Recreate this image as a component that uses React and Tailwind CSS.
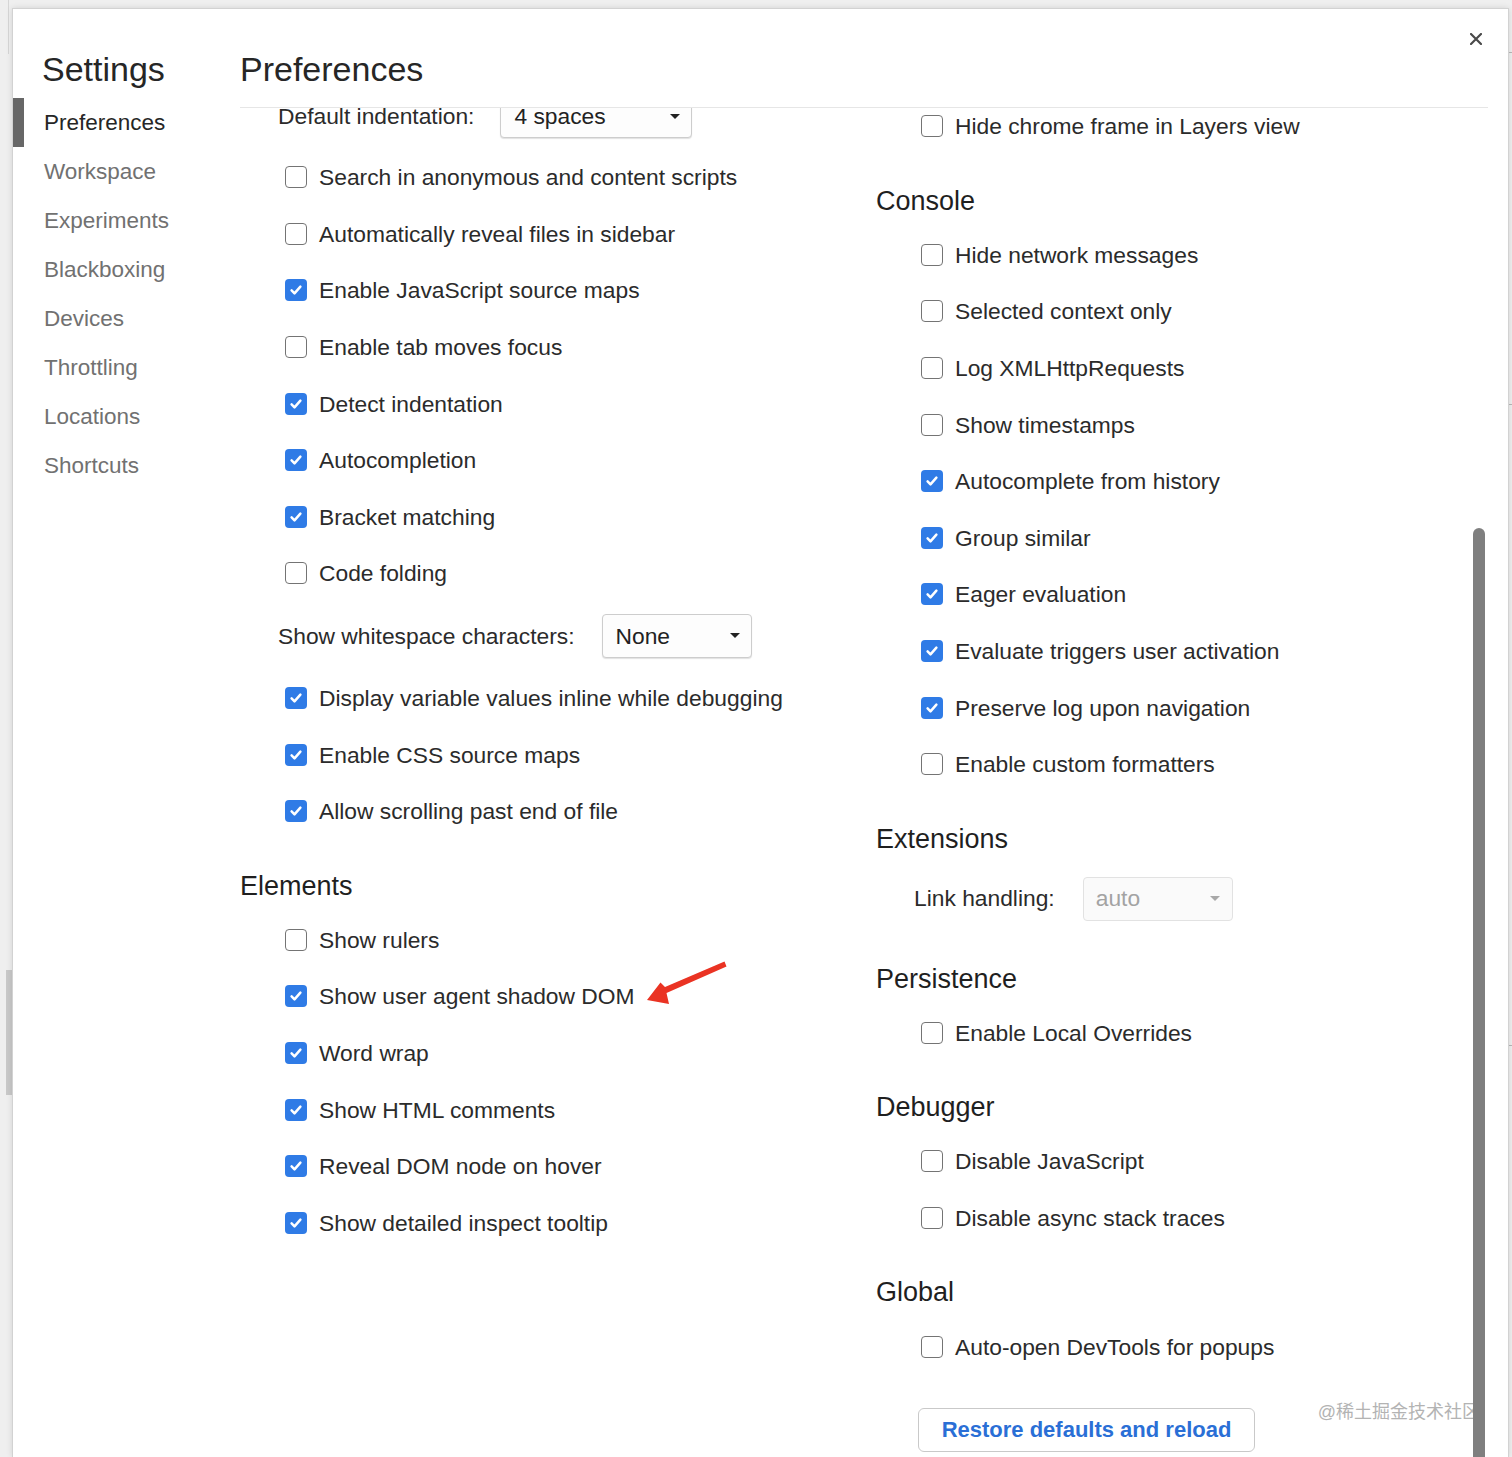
import React from "react";

const Box = ({ checked }) =>
  checked ? (
    <span className="flex h-[22px] w-[22px] shrink-0 items-center justify-center rounded-[4px] bg-[#2f7be6]">
      <svg viewBox="0 0 16 16" className="h-[16px] w-[16px]">
        <path d="M3.6 8.4l2.9 2.9 5.9-6.6" fill="none" stroke="white" strokeWidth="2.5" strokeLinecap="round" strokeLinejoin="round" />
      </svg>
    </span>
  ) : (
    <span className="h-[22px] w-[22px] shrink-0 rounded-[4px] border-[1.5px] border-[#747474] bg-white" />
  );

const Row = ({ label, checked, children }) => (
  <div className="relative flex h-[56.6px] items-center gap-[12px] pl-[45px]">
    <Box checked={checked} />
    <span className="whitespace-nowrap text-[22.8px] text-[#2b2b2b]">{label}</span>
    {children}
  </div>
);

const Header = ({ children }) => (
  <div className="flex h-[72px] items-end pb-[10px] text-[27px] leading-[32px] text-[#1f1f1f]">{children}</div>
);

const Caret = ({ color }) => (
  <svg viewBox="0 0 10 5" className="h-[5px] w-[10px]">
    <path d="M0 0h10L5 5z" fill={color} />
  </svg>
);

const Select = ({ value, width, disabled }) => (
  <div
    className={
      disabled
        ? "flex h-[44px] items-center justify-between rounded-[4px] border border-[#e2e2e2] bg-[#fafafa] pl-[12px] pr-[12px] text-[22.8px] text-[#a3a3a3]"
        : "flex h-[44px] items-center justify-between rounded-[4px] border border-[#cdcdcd] bg-[#fdfdfd] pl-[13px] pr-[11px] text-[22.8px] text-[#222] shadow-[0_1px_1px_rgba(0,0,0,0.12)]"
    }
    style={{ width }}
  >
    <span>{value}</span>
    <Caret color={disabled ? "#a8a8a8" : "#222"} />
  </div>
);

const SelectRow = ({ label, value, width, gap, disabled }) => (
  <div className="flex h-[68px] items-center pl-[38px]">
    <span className="whitespace-nowrap text-[22.8px] text-[#2b2b2b]">{label}</span>
    <div style={{ marginLeft: gap }}>
      <Select value={value} width={width} disabled={disabled} />
    </div>
  </div>
);

const sidebar = ["Preferences", "Workspace", "Experiments", "Blackboxing", "Devices", "Throttling", "Locations", "Shortcuts"];

export default function App() {
  return (
    <div className="relative h-[1457px] w-[1512px] overflow-hidden bg-[#efefef] pl-[12px] pr-[3px] pt-[8px] font-['Liberation_Sans','Helvetica',Arial,sans-serif]">
      {/* underlying window edges */}
      <div className="absolute left-[8px] top-0 h-[54px] w-px bg-[#d6d6d6]" />
      <div className="absolute left-[6px] top-[970px] h-[125px] w-[6px] bg-[#c9c9c9]" />
      <div className="absolute right-0 top-[52px] h-px w-[3px] bg-[#b8b8b8]" />
      <div className="absolute right-0 top-[404px] h-px w-[3px] bg-[#b8b8b8]" />
      <div className="absolute right-0 top-[1045px] h-px w-[3px] bg-[#b8b8b8]" />

      <div className="relative flex h-[1449px] w-[1497px] border-l border-r border-t border-[#d2d2d2] bg-white shadow-[0_0_6px_rgba(0,0,0,0.12)]">
        {/* sidebar */}
        <div className="w-[227px] shrink-0">
          <div className="h-[89px] pl-[29px] pt-[40px] text-[34px] leading-[40px] text-[#262626]">Settings</div>
          {sidebar.map((s, i) =>
            i === 0 ? (
              <div key={s} className="flex h-[49px] items-center border-l-[11px] border-[#676767] pl-[20px] text-[22.5px] text-[#262626]">
                {s}
              </div>
            ) : (
              <div key={s} className="flex h-[49px] items-center pl-[31px] text-[22.5px] text-[#717171]">
                {s}
              </div>
            )
          )}
        </div>

        {/* main */}
        <div className="flex min-w-0 flex-1 flex-col">
          <div className="mr-[20px] h-[99px] shrink-0 border-b border-[#e6e6e6] pt-[40px] text-[34px] leading-[40px] text-[#262626]">
            Preferences
          </div>
          <div className="flex flex-1 overflow-hidden">
            {/* left column */}
            <div className="-mt-[26px] w-[636px] shrink-0">
              <SelectRow label="Default indentation:" value="4 spaces" width={192} gap={26} />
              <div className="-mt-px" />
              <Row label="Search in anonymous and content scripts" />
              <Row label="Automatically reveal files in sidebar" />
              <Row label="Enable JavaScript source maps" checked />
              <Row label="Enable tab moves focus" />
              <Row label="Detect indentation" checked />
              <Row label="Autocompletion" checked />
              <Row label="Bracket matching" checked />
              <Row label="Code folding" />
              <SelectRow label="Show whitespace characters:" value="None" width={150} gap={27} />
              <Row label="Display variable values inline while debugging" checked />
              <Row label="Enable CSS source maps" checked />
              <Row label="Allow scrolling past end of file" checked />
              <Header>Elements</Header>
              <Row label="Show rulers" />
              <Row label="Show user agent shadow DOM" checked>
                <svg viewBox="0 0 95 55" className="absolute left-[400px] top-[-14px] h-[55px] w-[95px]">
                  <path d="M86.5 12.5L84.5 7.5L25 33L20.5 28.5L7 46L29 50L26.5 39Z" fill="#ea3323" />
                </svg>
              </Row>
              <Row label="Word wrap" checked />
              <Row label="Show HTML comments" checked />
              <Row label="Reveal DOM node on hover" checked />
              <Row label="Show detailed inspect tooltip" checked />
            </div>

            {/* right column */}
            <div className="-mt-[10px] flex-1">
              <Row label="Hide chrome frame in Layers view" />
              <Header>Console</Header>
              <Row label="Hide network messages" />
              <Row label="Selected context only" />
              <Row label="Log XMLHttpRequests" />
              <Row label="Show timestamps" />
              <Row label="Autocomplete from history" checked />
              <Row label="Group similar" checked />
              <Row label="Eager evaluation" checked />
              <Row label="Evaluate triggers user activation" checked />
              <Row label="Preserve log upon navigation" checked />
              <Row label="Enable custom formatters" />
              <Header>Extensions</Header>
              <SelectRow label="Link handling:" value="auto" width={150} gap={28} disabled />
              <Header>Persistence</Header>
              <Row label="Enable Local Overrides" />
              <Header>Debugger</Header>
              <Row label="Disable JavaScript" />
              <Row label="Disable async stack traces" />
              <Header>Global</Header>
              <Row label="Auto-open DevTools for popups" />
              <div className="ml-[42px] mt-[33px] flex h-[44px] w-[337px] items-center justify-center rounded-[6px] border border-[#c9c9c9] bg-white text-[22px] font-bold text-[#2a6fd6]">
                Restore defaults and reload
              </div>
            </div>
          </div>
        </div>

        {/* close */}
        <svg viewBox="0 0 12 12" className="absolute right-[26px] top-[24px] h-[12px] w-[12px]">
          <path d="M1 1L11 11M11 1L1 11" stroke="#4a4a4a" strokeWidth="2.2" strokeLinecap="round" />
        </svg>

        {/* watermark */}
        <div className="absolute right-[28px] top-[1390px] whitespace-nowrap text-[18px] text-[#b3b3b3] font-['Liberation_Sans','Noto_Sans_CJK_SC',sans-serif]">
          @稀土掘金技术社区
        </div>

        {/* scrollbar */}
        <div className="absolute bottom-0 right-[23px] top-[519px] w-[12px] rounded-t-full bg-[#7f7f7f]" />
      </div>
    </div>
  );
}
